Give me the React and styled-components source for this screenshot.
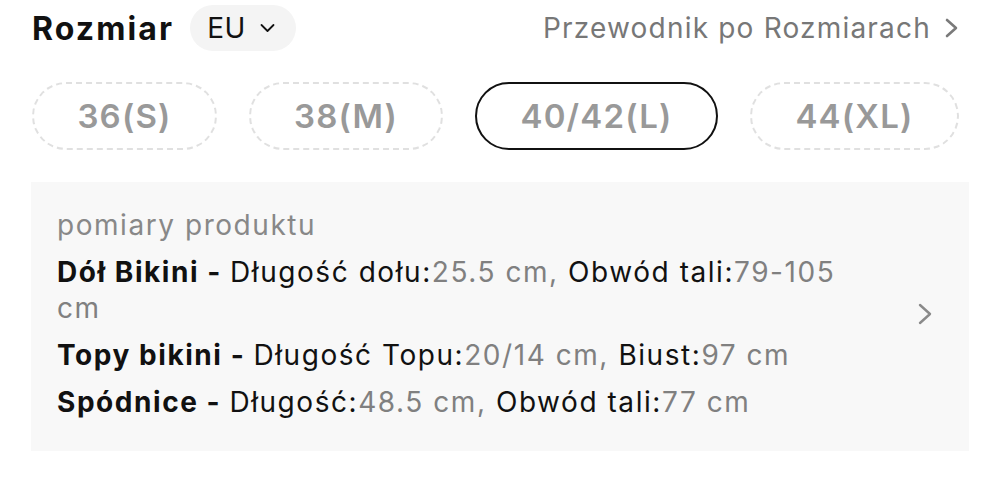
import React from 'react';
import styled, { createGlobalStyle } from 'styled-components';

const Global = createGlobalStyle`
  body {
    margin: 0;
    background: #fff;
    font-family: Inter, "Noto Sans", sans-serif;
    color: #111;
  }
`;

const Page = styled.div`
  width: 1000px;
  padding: 5px 42px 0 32px;
  box-sizing: border-box;
`;

const Header = styled.div`
  display: flex;
  align-items: center;
  justify-content: space-between;
  height: 46px;
`;

const Left = styled.div`
  display: flex;
  align-items: center;
  gap: 16px;
`;

const Title = styled.h2`
  margin: 0;
  font-size: 32px;
  font-weight: 700;
  letter-spacing: 2.1px;
  color: #111;
`;

const Region = styled.div`
  display: flex;
  align-items: center;
  gap: 14px;
  height: 46px;
  padding: 0 21px 0 17px;
  border-radius: 23px;
  background: #f4f4f4;
  font-size: 28px;
  letter-spacing: 0.5px;
  color: #111;
`;

const Guide = styled.div`
  display: flex;
  align-items: center;
  gap: 14px;
  font-size: 28px;
  letter-spacing: 1.2px;
  color: #777;
`;

const Sizes = styled.div`
  display: flex;
  gap: 32px;
  margin-top: 31px;
`;

const Size = styled.div`
  flex: 0 0 ${p => p.w}px;
  height: 68px;
  box-sizing: border-box;
  display: flex;
  align-items: center;
  justify-content: center;
  border-radius: 34px;
  border: ${p => (p.$active ? '2.5px solid #111' : '2px dashed #e0e0e0')};
  font-size: 33px;
  font-weight: 600;
  letter-spacing: 1.2px;
  color: #999;
`;

const Panel = styled.div`
  margin: 32px -11px 0 -1px;
  box-sizing: border-box;
  background: #f8f8f8;
  padding: 25px 37px 31px 26px;
  display: flex;
  align-items: center;
  justify-content: space-between;
`;

const Body = styled.div`
  width: 800px;
  font-size: 28px;
  line-height: 36px;
  letter-spacing: 1.55px;
`;

const Caption = styled.div`
  color: #888;
  margin-bottom: 11px;
`;

const Entry = styled.p`
  margin: 0;
  color: #111;
  & + & {
    margin-top: 11px;
  }
`;

const Name = styled.b`
  font-weight: 700;
`;

const Value = styled.span`
  color: #808080;
`;

const Chevron = ({ w, h, color, stroke }) => (
  <svg width={w} height={h} viewBox={`0 0 ${w} ${h}`} fill="none">
    <path
      d={`M2 2L${w - 2} ${h / 2}L2 ${h - 2}`}
      stroke={color}
      strokeWidth={stroke}
      strokeLinecap="round"
      strokeLinejoin="round"
    />
  </svg>
);

const Down = () => (
  <svg width="15" height="10" viewBox="0 0 15 10" fill="none">
    <path d="M1.5 2l6 6 6-6" stroke="#111" strokeWidth="1.8" strokeLinecap="round" strokeLinejoin="round" />
  </svg>
);

const sizes = [
  { label: '36(S)', w: 185 },
  { label: '38(M)', w: 194 },
  { label: '40/42(L)', w: 243, active: true },
  { label: '44(XL)', w: 209 },
];

const entries = [
  { name: 'Dół Bikini', parts: [['Długość dołu', '25.5 cm'], ['Obwód tali', '79-105 cm']] },
  { name: 'Topy bikini', parts: [['Długość Topu', '20/14 cm'], ['Biust', '97 cm']] },
  { name: 'Spódnice', parts: [['Długość', '48.5 cm'], ['Obwód tali', '77 cm']] },
];

export default function App() {
  return (
    <Page>
      <Global />
      <Header>
        <Left>
          <Title>Rozmiar</Title>
          <Region>EU <Down /></Region>
        </Left>
        <Guide>
          Przewodnik po Rozmiarach
          <Chevron w={13} h={20} color="#7a7a7a" stroke={2.6} />
        </Guide>
      </Header>
      <Sizes>
        {sizes.map(s => (
          <Size key={s.label} w={s.w} $active={s.active}>{s.label}</Size>
        ))}
      </Sizes>
      <Panel>
        <Body>
          <Caption>pomiary produktu</Caption>
          {entries.map(e => (
            <Entry key={e.name}>
              <Name>{e.name} - </Name>
              {e.parts.map(([k, v], i) => (
                <React.Fragment key={k}>
                  {k}:<Value>{v}{i < e.parts.length - 1 ? ', ' : ''}</Value>
                </React.Fragment>
              ))}
            </Entry>
          ))}
        </Body>
        <Chevron w={14} h={22} color="#8a8a8a" stroke={2.4} />
      </Panel>
    </Page>
  );
}
